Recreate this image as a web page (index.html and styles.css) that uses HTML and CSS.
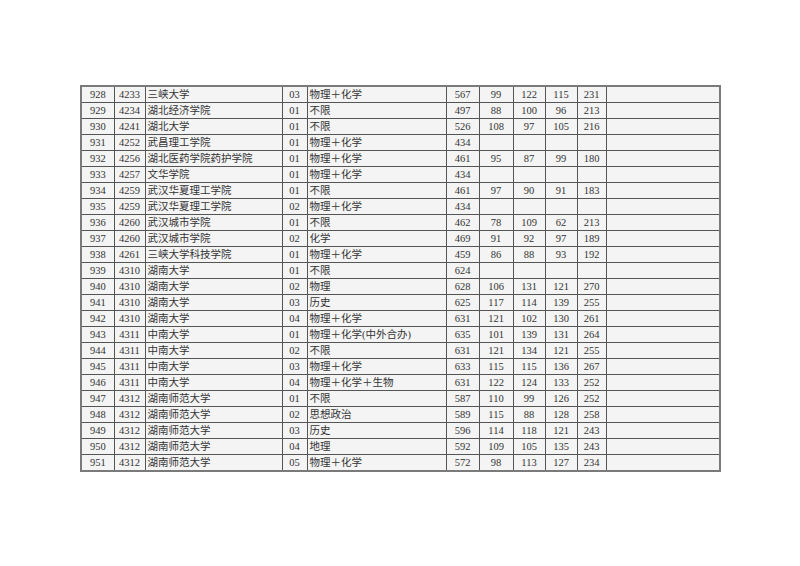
FILE: index.html
```html
<!DOCTYPE html>
<html lang="zh">
<head>
<meta charset="utf-8">
<link rel="stylesheet" href="styles.css">
</head>
<body>
<table class="grid">
<colgroup>
<col class="w1"><col class="w2"><col class="w3"><col class="w4"><col class="w5"><col class="w6"><col class="w7"><col class="w8"><col class="w9"><col class="w10"><col class="w11">
</colgroup>
<tbody>
<tr><td>928</td><td>4233</td><td class="l">三峡大学</td><td>03</td><td class="l">物理＋化学</td><td>567</td><td>99</td><td>122</td><td>115</td><td>231</td><td></td></tr>
<tr><td>929</td><td>4234</td><td class="l">湖北经济学院</td><td>01</td><td class="l">不限</td><td>497</td><td>88</td><td>100</td><td>96</td><td>213</td><td></td></tr>
<tr><td>930</td><td>4241</td><td class="l">湖北大学</td><td>01</td><td class="l">不限</td><td>526</td><td>108</td><td>97</td><td>105</td><td>216</td><td></td></tr>
<tr><td>931</td><td>4252</td><td class="l">武昌理工学院</td><td>01</td><td class="l">物理＋化学</td><td>434</td><td></td><td></td><td></td><td></td><td></td></tr>
<tr><td>932</td><td>4256</td><td class="l">湖北医药学院药护学院</td><td>01</td><td class="l">物理＋化学</td><td>461</td><td>95</td><td>87</td><td>99</td><td>180</td><td></td></tr>
<tr><td>933</td><td>4257</td><td class="l">文华学院</td><td>01</td><td class="l">物理＋化学</td><td>434</td><td></td><td></td><td></td><td></td><td></td></tr>
<tr><td>934</td><td>4259</td><td class="l">武汉华夏理工学院</td><td>01</td><td class="l">不限</td><td>461</td><td>97</td><td>90</td><td>91</td><td>183</td><td></td></tr>
<tr><td>935</td><td>4259</td><td class="l">武汉华夏理工学院</td><td>02</td><td class="l">物理＋化学</td><td>434</td><td></td><td></td><td></td><td></td><td></td></tr>
<tr><td>936</td><td>4260</td><td class="l">武汉城市学院</td><td>01</td><td class="l">不限</td><td>462</td><td>78</td><td>109</td><td>62</td><td>213</td><td></td></tr>
<tr><td>937</td><td>4260</td><td class="l">武汉城市学院</td><td>02</td><td class="l">化学</td><td>469</td><td>91</td><td>92</td><td>97</td><td>189</td><td></td></tr>
<tr><td>938</td><td>4261</td><td class="l">三峡大学科技学院</td><td>01</td><td class="l">物理＋化学</td><td>459</td><td>86</td><td>88</td><td>93</td><td>192</td><td></td></tr>
<tr><td>939</td><td>4310</td><td class="l">湖南大学</td><td>01</td><td class="l">不限</td><td>624</td><td></td><td></td><td></td><td></td><td></td></tr>
<tr><td>940</td><td>4310</td><td class="l">湖南大学</td><td>02</td><td class="l">物理</td><td>628</td><td>106</td><td>131</td><td>121</td><td>270</td><td></td></tr>
<tr><td>941</td><td>4310</td><td class="l">湖南大学</td><td>03</td><td class="l">历史</td><td>625</td><td>117</td><td>114</td><td>139</td><td>255</td><td></td></tr>
<tr><td>942</td><td>4310</td><td class="l">湖南大学</td><td>04</td><td class="l">物理＋化学</td><td>631</td><td>121</td><td>102</td><td>130</td><td>261</td><td></td></tr>
<tr><td>943</td><td>4311</td><td class="l">中南大学</td><td>01</td><td class="l">物理＋化学(中外合办)</td><td>635</td><td>101</td><td>139</td><td>131</td><td>264</td><td></td></tr>
<tr><td>944</td><td>4311</td><td class="l">中南大学</td><td>02</td><td class="l">不限</td><td>631</td><td>121</td><td>134</td><td>121</td><td>255</td><td></td></tr>
<tr><td>945</td><td>4311</td><td class="l">中南大学</td><td>03</td><td class="l">物理＋化学</td><td>633</td><td>115</td><td>115</td><td>136</td><td>267</td><td></td></tr>
<tr><td>946</td><td>4311</td><td class="l">中南大学</td><td>04</td><td class="l">物理＋化学＋生物</td><td>631</td><td>122</td><td>124</td><td>133</td><td>252</td><td></td></tr>
<tr><td>947</td><td>4312</td><td class="l">湖南师范大学</td><td>01</td><td class="l">不限</td><td>587</td><td>110</td><td>99</td><td>126</td><td>252</td><td></td></tr>
<tr><td>948</td><td>4312</td><td class="l">湖南师范大学</td><td>02</td><td class="l">思想政治</td><td>589</td><td>115</td><td>88</td><td>128</td><td>258</td><td></td></tr>
<tr><td>949</td><td>4312</td><td class="l">湖南师范大学</td><td>03</td><td class="l">历史</td><td>596</td><td>114</td><td>118</td><td>121</td><td>243</td><td></td></tr>
<tr><td>950</td><td>4312</td><td class="l">湖南师范大学</td><td>04</td><td class="l">地理</td><td>592</td><td>109</td><td>105</td><td>135</td><td>243</td><td></td></tr>
<tr><td>951</td><td>4312</td><td class="l">湖南师范大学</td><td>05</td><td class="l">物理＋化学</td><td>572</td><td>98</td><td>113</td><td>127</td><td>234</td><td></td></tr>
</tbody>
</table>
</body>
</html>
```
FILE: styles.css
```css
html, body {
  margin: 0;
  padding: 0;
  background: #ffffff;
}
body {
  padding: 85px 0 0 80px;
}
.grid {
  border-collapse: collapse;
  table-layout: fixed;
  width: 639px;
  border: 2px solid #7a7a7a;
  background: #f4f4f4;
  font-family: "Liberation Serif", "Noto Sans CJK SC", serif;
  font-size: 10.5px;
  color: #333333;
}
.grid td {
  border: 1px solid #555555;
  height: 15px;
  padding: 0;
  line-height: 15px;
  text-align: center;
  white-space: nowrap;
  overflow: hidden;
}
.grid td.l {
  text-align: left;
  padding-left: 2px;
}
.w1 { width: 33px; }
.w2 { width: 31px; }
.w3 { width: 137px; }
.w4 { width: 25px; }
.w5 { width: 139px; }
.w6 { width: 33px; }
.w7 { width: 34px; }
.w8 { width: 32px; }
.w9 { width: 32px; }
.w10 { width: 29px; }
.w11 { width: 114px; }
```
